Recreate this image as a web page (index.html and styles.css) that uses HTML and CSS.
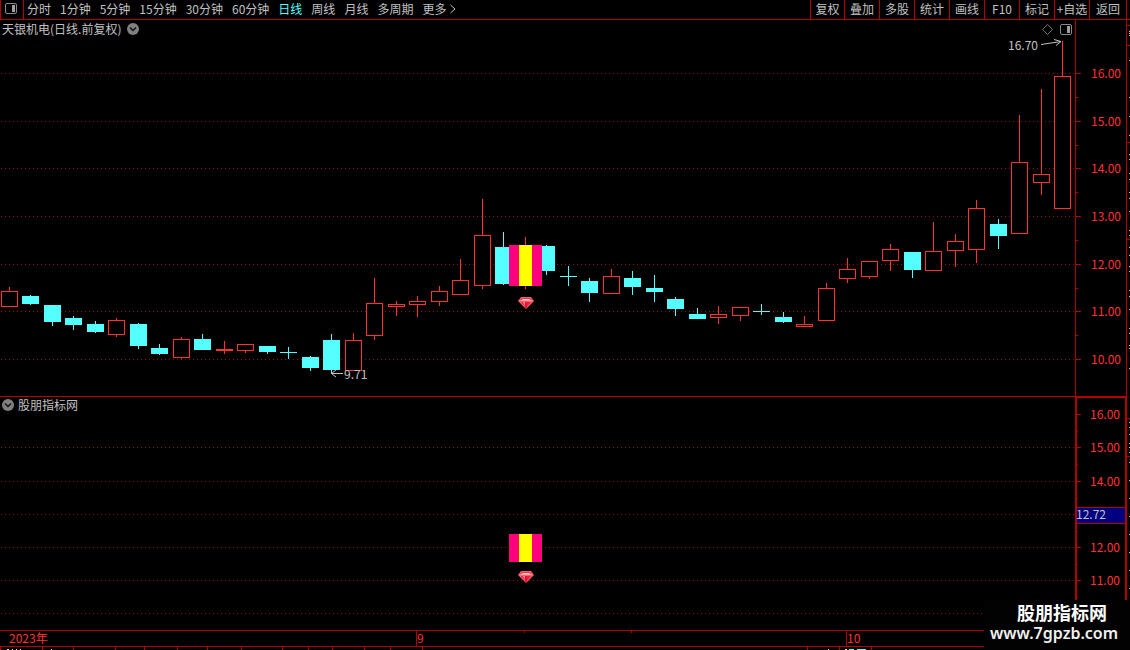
FILE: index.html
```html
<!DOCTYPE html>
<html lang="zh-CN">
<head>
<meta charset="utf-8">
<title>天银机电 日线</title>
<link rel="stylesheet" href="styles.css">
</head>
<body>
<div class="app">
  <header class="toolbar">
    <button class="layout-btn" type="button" aria-label="布局">
      <svg width="12" height="11"><rect x=".5" y=".5" width="11" height="10" rx="1.5" fill="none" stroke="#8a8a8a"/><rect x="7" y="2" width="3" height="7" fill="#a0a0a0"/></svg>
    </button>
    <nav class="periods">
      <button type="button">分时</button>
      <button type="button">1分钟</button>
      <button type="button">5分钟</button>
      <button type="button">15分钟</button>
      <button type="button">30分钟</button>
      <button type="button">60分钟</button>
      <button type="button" class="active">日线</button>
      <button type="button">周线</button>
      <button type="button">月线</button>
      <button type="button">多周期</button>
      <button type="button" class="more">更多<svg width="6" height="10"><path d="M.5 1 5 5 .5 9" fill="none" stroke="#c0c0c0"/></svg></button>
    </nav>
    <div class="tools">
      <button type="button">复权</button>
      <button type="button">叠加</button>
      <button type="button">多股</button>
      <button type="button">统计</button>
      <button type="button">画线</button>
      <button type="button">F10</button>
      <button type="button">标记</button>
      <button type="button">+自选</button>
      <button type="button">返回</button>
    </div>
  </header>

  <main class="workspace">
    <section class="panel main-panel">
      <div class="panel-head">
        <h1>天银机电(日线.前复权)</h1>
        <button type="button" aria-label="展开"><svg width="12" height="12"><circle cx="6" cy="6" r="6" fill="#808080"/><path d="M3 4.5 6 7.5 9 4.5" fill="none" stroke="#111" stroke-width="1.5"/></svg></button>
      </div>
      <div class="panel-actions">
        <button type="button" aria-label="标记点"><svg width="11" height="11"><path d="M5.500 .5 10.500 5.500 5.500 10.500 .5 5.500Z" fill="none" stroke="#808080" stroke-width=".9"/></svg></button>
        <button type="button" aria-label="侧栏"><svg width="12" height="11"><rect x=".5" y=".5" width="11" height="10" rx="1.5" fill="none" stroke="#8a8a8a"/><rect x="7" y="2" width="3" height="7" fill="#a0a0a0"/></svg></button>
      </div>
      <svg class="plot" height="376">
        <defs>
          <g id="gem">
            <path d="M3 0H13L16 4 8 12 0 4Z" fill="#f2646c"/>
            <path d="M4 1H12L14 3H2Z" fill="#ff2a50"/>
            <path d="M2 4 5 2H11L14 4 11 3.500H5Z" fill="#ffd8d8"/>
            <path d="M3 5H13L8 11Z" fill="#ff1c3c"/>
            <path d="M5 5H7V9Z" fill="#ff8c92"/>
            <path d="M8 5V11" stroke="#c80828" fill="none"/>
          </g>
        </defs>
        <g transform="translate(0 -20)">
          <g id="grid-main"></g>
          <g id="candles"></g>
          <rect x="509" y="245" width="33" height="41" fill="#ff007f"/>
          <rect x="519" y="245" width="13" height="41" fill="#ff0"/>
          <use href="#gem" x="518" y="297"/>
          <g class="note">
            <path d="M331 373.500H343M336 370 331.500 373.500 336 377M1041 44.500 1061 41.500M1054 39.500 1061 41.500 1056 45.500"/>
            <text x="344" y="379">9.71</text>
            <text x="1008" y="50">16.70</text>
          </g>
        </g>
      </svg>
    </section>
    <svg class="axis main-axis" height="376"><g id="axis-main" transform="translate(0 -20)"></g></svg>

    <section class="panel sub-panel">
      <div class="panel-head">
        <button type="button" aria-label="展开"><svg width="12" height="12"><circle cx="6" cy="6" r="6" fill="#808080"/><path d="M3 4.500 6 7.500 9 4.500" fill="none" stroke="#111" stroke-width="1.5"/></svg></button>
        <h2>股朋指标网</h2>
      </div>
      <svg class="plot" height="233">
        <g transform="translate(0 -397)">
          <g id="grid-sub"></g>
          <rect x="509" y="534" width="33" height="28" fill="#ff007f"/>
          <rect x="519" y="534" width="13" height="28" fill="#ff0"/>
          <use href="#gem" x="518" y="571"/>
        </g>
      </svg>
    </section>
    <svg class="axis sub-axis" height="233">
      <g id="axis-sub" transform="translate(0 -397)"></g>
      <rect x="0" y="110.500" width="52" height="16" fill="#000080" stroke="#b40000"/>
      <path d="M0 .5H52M50.500 0V233" stroke="#b40000"/>
      <path d="M1 0V233" stroke="#b40000" stroke-width="2"/>
      <text class="current" x="1" y="122">12.72</text>
    </svg>
    <svg class="edge" id="edge"></svg>
  </main>

  <footer>
    <svg class="timeline" height="15">
      <path d="M416.500 0V15M846.500 0V15M524.500 0V2M631.500 0V2" stroke="#b40000"/>
      <text x="9" y="12">2023年</text>
      <text x="417" y="12">9</text>
      <text x="847" y="12">10</text>
    </svg>
    <svg class="status" height="3">
      <path d="M.5 0V3M42.500 0V3M73.500 0V3M115.500 0V3M144.500 0V3M177.500 0V3M207.500 0V3M241.500 0V3M282.500 0V3M308.500 0V3M332.500 0V3M364.500 0V3M390.500 0V3M422.500 0V3M807.500 0V3M839.500 0V3M871.500 0V3" stroke="#b40000"/>
      <path d="M7 2.500H9M12 2.500H13M16 2.500H17M20 2.500H21M51 2.500H52M828 2.500H829M845 2.500H847" stroke="#ddd"/>
      <path d="M849 2.500H854M857 2.500H866" stroke="#54ffff"/>
    </svg>
  </footer>

  <div class="watermark">
    <strong>股朋指标网</strong>
    <span>www.7gpzb.com</span>
  </div>
</div>
<script src="chart.js"></script>
</body>
</html>
```
FILE: styles.css
```css
* { box-sizing: border-box; }
body {
  margin: 0;
  background: #000;
  color: #c0c0c0;
  font: 12px/18px "Noto Sans CJK SC", sans-serif;
}
button {
  margin: 0;
  padding: 0;
  border: 0;
  background: none;
  color: inherit;
  font: inherit;
  white-space: nowrap;
}
svg { display: block; flex: none; }
.app { position: relative; overflow: hidden; }

.toolbar {
  display: flex;
  height: 20px;
  padding-right: 3px;
  border-bottom: 1px solid #b40000;
}
.layout-btn {
  display: flex;
  align-items: center;
  width: 24px;
  padding-left: 4px;
  padding-bottom: 2px;
  border: solid #b40000;
  border-width: 0 1px;
}
.periods { display: flex; gap: 9px; padding-left: 3px; padding-bottom: 2px; }
.periods .active { color: #54ffff; }
.periods .more { display: flex; align-items: center; gap: 4px; }
.tools { display: flex; margin-left: auto; border-right: 1px solid #b40000; }
.tools button { width: 35px; padding-bottom: 2px; border-left: 1px solid #b40000; }
.tools button:first-child { width: 34px; }
.tools button:last-child { width: 37px; }

.workspace { display: grid; grid-template-columns: minmax(0, 1fr) 51px 4px; }
.panel { position: relative; min-width: 0; }
.plot { width: 100%; }
.main-panel, .main-axis { border-bottom: 1px solid #b40000; }
.main-axis { height: 377px; border-left: 1px solid #b40000; }
.axis { width: 100%; fill: #ff3232; }
.axis .current { fill: #c0c0c0; }
.edge { grid-column: 3; grid-row: 1 / 3; width: 4px; height: 100%; }
.panel-head { position: absolute; top: 0; left: 2px; display: flex; align-items: center; gap: 6px; }
.sub-panel .panel-head { top: -1px; gap: 4px; }
h1, h2 { margin: 0; font-size: 12px; font-weight: 400; line-height: 18px; }
.panel-actions { position: absolute; top: 4px; right: 3px; display: flex; gap: 7px; }
.note path { fill: none; stroke: #c0c0c0; }
.note text { fill: #c0c0c0; }
.grid { stroke: #9a0c0c; stroke-dasharray: 1 3; }

.timeline, .status { width: 100%; }
.timeline { height: 17px; border: solid #b40000; border-width: 1px 0; fill: #ff3232; }

.watermark {
  position: absolute;
  right: 0;
  bottom: 0;
  width: 146px;
  height: 50px;
  padding: 4px 6px;
  background: #020202;
  color: #fff;
  white-space: nowrap;
}
.watermark strong { display: block; padding-left: 27px; font: bold 18px/20px "Liberation Sans", "Noto Sans CJK SC", sans-serif; }
.watermark span { display: block; color: #f0f0f0; font: 600 16px/18px "Noto Sans", sans-serif; }
```
FILE: chart.js
```js
const NS = 'http://www.w3.org/2000/svg';
const RED = '#ff3232';
const CYAN = '#54ffff';
const LINE = '#b40000';

function add(parent, name, attrs, text) {
  const node = document.createElementNS(NS, name);
  for (const key in attrs) node.setAttribute(key, attrs[key]);
  if (text) node.textContent = text;
  parent.appendChild(node);
}
const byId = (id) => document.getElementById(id);

// Each candle: direction, body top, body bottom, wick top, wick bottom
const candles = [
  ['u',291,307,287,307],['d',296,304,295,305],['d',305,322,305,326],['d',318,325,316,330],
  ['d',324,332,321,333],['u',320,335,318,337],['d',324,346,323,349],['d',348,354,344,355],
  ['u',339,358,337,359],['d',339,350,334,350],['u',349,351,341,354],['u',344,351,344,353],
  ['d',346,352,346,354],['d',352,353,347,359],['d',357,368,356,371],['d',340,370,334,374],
  ['u',340,371,333,371],['u',303,336,278,340],['u',304,307,301,316],['u',301,305,296,317],
  ['u',291,302,286,306],['u',280,295,259,295],['u',235,286,199,289],['d',247,284,232,285],
  ['u',245,286,237,289],['d',246,271,245,275],['d',276,277,266,286],['d',281,293,278,302],
  ['u',276,294,269,294],['d',278,287,271,295],['d',288,292,275,302],['d',299,309,297,316],
  ['d',314,319,308,319],['u',314,318,306,324],['u',307,316,307,321],['d',311,312,304,315],
  ['d',317,322,312,323],['u',324,327,316,327],['u',288,321,283,321],['u',269,279,258,283],
  ['u',261,277,261,279],['u',249,261,244,271],['d',252,270,252,278],['u',251,271,222,271],
  ['u',241,251,234,267],['u',208,250,200,263],['d',224,236,219,249],['u',162,234,115,234],
  ['u',174,183,89,195],['u',76,209,41,209]
];
candles.forEach(([kind, top, bottom, high, low], i) => {
  const x = 1 + Math.floor(i * 21.5 + 0.01);
  const color = kind === 'u' ? RED : CYAN;
  const g = byId('candles');
  add(g, 'rect', { x: x + 8, y: high, width: 1, height: low - high, fill: color });
  if (kind === 'u') {
    add(g, 'rect', { x: x + 0.5, y: top + 0.5, width: 16, height: bottom - top - 1, fill: '#000', stroke: color });
  } else {
    add(g, 'rect', { x, y: top, width: 17, height: bottom - top, fill: color });
  }
});

function scale(gridId, axisId, rows, minors, x) {
  rows.forEach(([y, label, noGrid]) => {
    if (!noGrid) add(byId(gridId), 'line', { class: 'grid', x1: 1, x2: '100%', y1: y + 0.5, y2: y + 0.5 });
    if (!label) return;
    add(byId(axisId), 'rect', { x, y, width: 5, height: 1, fill: LINE });
    add(byId(axisId), 'text', { x: 15, y: y + 5 }, label);
  });
  minors.forEach((y) => add(byId(axisId), 'rect', { x, y, width: 2, height: 1, fill: LINE }));
}
scale('grid-main', 'axis-main',
  [[73,'16.00'],[121,'15.00'],[168,'14.00'],[216,'13.00'],[264,'12.00'],[311,'11.00'],[359,'10.00']],
  [97,145,192,240,288,335], 0);
scale('grid-sub', 'axis-sub',
  [[414,'16.00',true],[447,'15.00'],[481,'14.00'],[514,''],[547,'12.00'],[580,'11.00'],[613,'']],
  [431,464,498,531,564,597], 1);

const edge = byId('edge');
add(edge, 'rect', { x: 0, y: 0, width: 1, height: '100%', fill: LINE });
[25,45,142,239,418,456].forEach((y) => add(edge, 'rect', { x: 1, y: y - 20, width: 3, height: 1, fill: LINE }));
[31,33,35,60,97,116,135,154,159,173,179,192,198,211,230,235,247,255,266,271,290,296,309,328,333,345,348,368,
 422,427,434,443,447,452,462,480,498,516,534,552,570,588].forEach((y) =>
  add(edge, 'rect', { x: 3, y: y - 20, width: 1, height: 1, fill: '#c0c0c0' }));
```
